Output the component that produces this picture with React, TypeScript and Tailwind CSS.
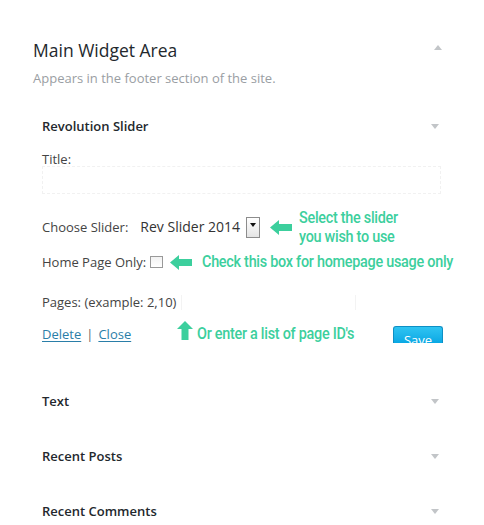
import React from 'react';

// Small grey caret used by the widget headers
function Caret({ up = false }: { up?: boolean }) {
  return (
    <svg width="8" height="5" viewBox="0 0 8 5" className="shrink-0">
      <polygon points={up ? '0,5 4,0 8,5' : '0,0 8,0 4,5'} fill="#c2c5c8" />
    </svg>
  );
}

function ArrowLeft() {
  return (
    <svg width="22" height="15" viewBox="0 0 22 15" className="shrink-0">
      <polygon points="0,7.5 9,0 9,4 22,4 22,11 9,11 9,15" fill="#3ccf9d" />
    </svg>
  );
}

function ArrowUp() {
  return (
    <svg width="16" height="19" viewBox="0 0 16 19" className="shrink-0">
      <polygon points="8,0 16,8 11.5,8 11.5,19 4.5,19 4.5,8 0,8" fill="#3ccf9d" />
    </svg>
  );
}

const note =
  "shrink-0 whitespace-nowrap font-['Roboto',sans-serif] font-medium text-[#3ccf9d] text-[16px] tracking-[-0.3px] origin-left scale-x-[0.9]";

function WidgetRow({ title, top }: { title: string; top: string }) {
  return (
    <div className={`${top} flex h-[20px] items-center justify-between pl-[9px] pr-[2px]`}>
      <span className="text-[13px] font-semibold leading-[20px] text-[#23282d]">{title}</span>
      <Caret />
    </div>
  );
}

export default function App() {
  return (
    <div className="h-[525px] w-[484px] overflow-hidden bg-white font-['Open_Sans',sans-serif]">
      <div className="pl-[33px] pr-[43px] pt-[38px]">
        {/* Sidebar header */}
        <div className="flex h-[24px] items-center justify-between">
          <h2 className="text-[17.5px] leading-[24px] text-[#23282d]">Main Widget Area</h2>
          <span className="mb-[6px] mr-[-1px]">
            <Caret up />
          </span>
        </div>
        <p className="mt-[6px] text-[13px] leading-[20px] text-[#9a9ea3]">
          Appears in the footer section of the site.
        </p>

        {/* Open widget */}
        <WidgetRow title="Revolution Slider" top="mt-[28px]" />
        <div className="whitespace-nowrap pl-[9px] text-[13px] text-[#444]">
          <div className="mt-[13px] h-[20px] leading-[20px]">Title:</div>
          <div className="-mt-[3px] h-[28px] border border-dashed border-[#f1f1f1]" />

          <div className="mt-[23px] flex h-[20px] items-center">
            <span className="shrink-0 leading-[20px]">Choose Slider:</span>
            <span className="ml-[12px] shrink-0 text-[14px] leading-[20px] text-[#333]">Rev Slider 2014</span>
            <span className="ml-[6px] flex h-[21px] w-[14px] shrink-0 flex-col items-center border border-[#8c8c8c] bg-gradient-to-b from-white to-[#e4e4e4] pt-[5px]">
              <svg width="6" height="4" viewBox="0 0 6 4">
                <polygon points="0,0 6,0 3,4" fill="#111" />
              </svg>
            </span>
            <span className="ml-[10px] shrink-0">
              <ArrowLeft />
            </span>
            <div className={`ml-[7px] flex flex-col leading-[19px] ${note}`}>
              <span className="-mt-[1px]">Select the slider</span>
              <span>you wish to use</span>
            </div>
          </div>

          <div className="mt-[15px] flex h-[20px] items-center">
            <span className="shrink-0 leading-[20px]">Home Page Only:</span>
            <span className="ml-[4px] h-[12px] w-[13px] shrink-0 border border-[#999] bg-gradient-to-b from-[#f2f2f2] to-white" />
            <span className="ml-[7px] shrink-0">
              <ArrowLeft />
            </span>
            <span className={`ml-[10px] w-[250px] leading-[20px] ${note}`}>
              Check this box for homepage usage only
            </span>
          </div>

          <div className="mt-[20px] flex h-[20px] items-center">
            <span className="shrink-0 leading-[20px]">Pages: (example: 2,10)</span>
            <span className="ml-[5px] h-[15px] w-[175px] border-x border-[#f3f3f3]" />
          </div>

          <div className="mt-[12px] flex h-[22px] items-start">
            <a className="leading-[20px] text-[#2a7ea8] underline underline-offset-2">Delete</a>
            <span className="mx-[5px] leading-[20px] text-[#666]">|</span>
            <a className="leading-[20px] text-[#2a7ea8] underline underline-offset-2">Close</a>
            <span className="ml-[46px] mt-[-3px] shrink-0">
              <ArrowUp />
            </span>
            <span className={`ml-[4px] w-[160px] leading-[20px] ${note}`}>
              Or enter a list of page ID's
            </span>
            <span className="ml-auto mr-[-2px] mt-[2px] h-[17px] w-[50px] shrink-0 overflow-hidden rounded-t-[3px] border border-b-0 border-[#0e8fc4] bg-gradient-to-b from-[#2ec4f2] to-[#07a8e4] text-center text-[13px] leading-[26px] text-white">
              Save
            </span>
          </div>
        </div>

        {/* Collapsed widgets */}
        <WidgetRow title="Text" top="mt-[45px]" />
        <WidgetRow title="Recent Posts" top="mt-[35px]" />
        <WidgetRow title="Recent Comments" top="mt-[35px]" />
      </div>
    </div>
  );
}
